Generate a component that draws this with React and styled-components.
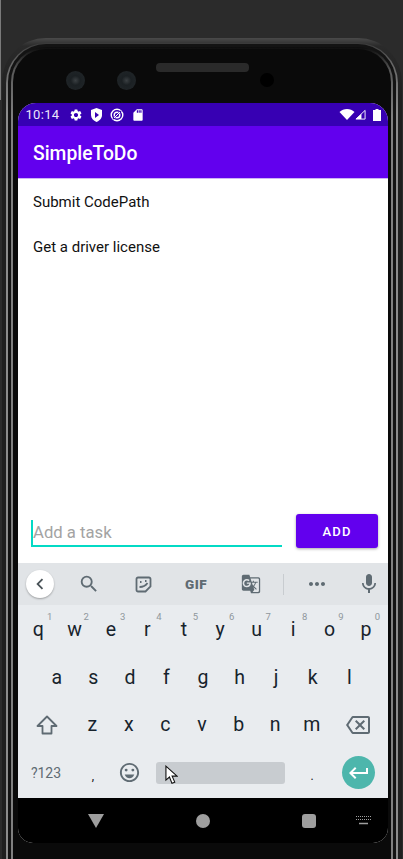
import React from "react";
import styled, { createGlobalStyle } from "styled-components";
import {
  MdSettings, MdSdCard, MdSearch, MdMic, MdChevronLeft, MdMoreHoriz,
  MdKeyboardReturn, MdOutlineBackspace, MdOutlineEmojiEmotions, MdGTranslate,
} from "react-icons/md";

const Global = createGlobalStyle`
  html, body { margin: 0; padding: 0; height: 859px; overflow: hidden; background: #2b2b2b; }
  * { box-sizing: border-box; }
  body { font-family: Roboto, "Liberation Sans", sans-serif; }
`;
const Page = styled.div`
  position: relative; width: 403px; height: 859px; overflow: hidden; padding: 38px 1px 0 2px; background: #2b2b2b;
  &::before { content: ""; position: absolute; left: 0; top: 0; width: 1px; height: 100px; background: #7a7a7a; }
`;
const Shell = styled.div`
  height: 860px; border-radius: 44px 44px 0 0; padding: 5px 4px 0;
  background: linear-gradient(#4a4a4a 0, #2a2a2a 8px, #1f1f1f 60px);
`;
const OuterRim = styled.div`
  height: 100%; border-radius: 40px 40px 0 0; padding: 1px 2px 0;
  background: linear-gradient(#3a3a3a 0, #666 20px, #8c8c8c 70px);
`;
const Gap = styled.div`
  height: 100%; border-radius: 38px 38px 0 0; padding: 3px 3px 0; background: #131313;
`;
const InnerRim = styled.div`
  height: 100%; border-radius: 35px 35px 0 0; padding: 2px 2px 0;
  background: linear-gradient(#0c0c0c 0, #5a5a5a 24px, #808080 70px);
`;
const Bezel = styled.div`
  height: 100%; border-radius: 33px 33px 0 0; background: #0a0a0a; padding: 0 3px 0 5px;
  display: flex; flex-direction: column;
`;
const Notch = styled.div`
  height: 54px; flex: none; display: flex; align-items: flex-start; padding-left: 47.5px;
`;
const Lens = styled.div`
  width: 19px; height: 19px; border-radius: 50%; margin-top: 21.5px; margin-right: ${p => p.$gap}px;
  background: radial-gradient(circle at 50% 50%, #3a3f42 0, #1b2023 35%, #22272a 100%);
`;
const Speaker = styled.div`
  width: 93px; height: 9px; border-radius: 4px; margin-top: 14px; margin-right: 11px; background: #2a2a2a;
`;
const FrontCam = styled.div`
  width: 14px; height: 14px; border-radius: 50%; margin-top: 24px; background: #000;
`;
const Screen = styled.div`
  width: 370px; height: 740px; flex: none; border-radius: 18px 18px 15px 15px; overflow: hidden;
  display: flex; flex-direction: column; background: #fff; position: relative;
`;
const StatusBar = styled.div`
  height: 23px; flex: none; background: #3700b3; color: #fff; display: flex; align-items: center;
  padding: 0 7px 0 7.5px; font-size: 13px;
`;
const Time = styled.span`
  width: 43px; font-weight: 400; letter-spacing: .3px; color: #ece6fb;
`;
const StatusIcons = styled.div`
  display: flex; align-items: center; gap: 7px; flex: 1;
`;
const SysIcons = styled.div`
  display: flex; align-items: center;
`;
const Battery = styled.svg`
  margin-left: 7px; width: 8px; height: 12px;
`;
const AppBar = styled.div`
  height: 53px; flex: none; background: #6200ee; color: #fff; font-size: 19.3px; font-weight: 500;
  display: flex; align-items: center; padding: 2px 15px 0; border-bottom: 1px solid #cdb3f5;
`;
const List = styled.div`
  flex: 1; padding: 0 15px; background: #fff; font-size: 15px; color: #111;
`;
const Task = styled.div`
  height: 45px; display: flex; align-items: center;
`;
const InputRow = styled.div`
  height: 66px; flex: none; display: flex; align-items: flex-start; padding: 17px 10px 0 13px;
  justify-content: space-between; background: #fff;
`;
const Field = styled.div`
  width: 251px; height: 33px; border-bottom: 2px solid #03dac5; display: flex; align-items: center;
  font-size: 16.7px; color: #a3a3a3; position: relative; padding: 5px 0 0 2px;
`;
const Caret = styled.span`
  width: 2px; height: 25px; background: #03dac5; position: absolute; left: 0; top: 6px;
`;
const Add = styled.button`
  width: 82px; height: 34px; border: 0; border-radius: 3px; background: #6200ee; color: #fff;
  font: 500 13px Roboto, sans-serif; letter-spacing: 1.2px; box-shadow: 0 1px 3px rgba(0,0,0,.35);
`;
const Toolbar = styled.div`
  height: 42px; flex: none; background: #e1e4e7; display: flex; align-items: center;
  color: #5f6b73; padding-left: 8px;
`;
const Back = styled.div`
  width: 28px; height: 28px; border-radius: 50%; background: #fff; display: flex; align-items: center; justify-content: center;
  box-shadow: 0 1px 2px rgba(0,0,0,.3); color: #4a5358; font-size: 22px; margin-right: 13px;
`;
const ToolSlot = styled.div`
  width: ${p => p.$w}px; flex: none; display: flex; justify-content: center; align-items: center; font-size: ${p => p.$size || 24}px;
`;
const Gif = styled.span`
  font: 900 13.5px Roboto, sans-serif; letter-spacing: .4px; color: #5f6b73; margin-left: -2px;
`;
const Divider = styled.div`
  width: 1px; height: 21px; background: #c8ccd0;
`;
const Keys = styled.div`
  flex: none; height: 193px; background: #e9ecef; display: flex; flex-direction: column;
`;
const KeyRow = styled.div`
  height: 47.5px; flex: none; display: flex; align-items: center; padding: 0 ${p => p.$r || 0}px 0 ${p => p.$l || 0}px;
  &:first-child { height: 49px; }
`;
const Key = styled.div`
  flex: 1; position: relative; text-align: center; font-size: 19.5px; color: #17232c; line-height: 24px;
  display: flex; justify-content: center; align-items: center;
`;
const FixedKey = styled(Key)`
  flex: none; width: ${p => p.$w}px; padding-right: ${p => p.$pr || 0}px; padding-left: ${p => p.$pl || 0}px;
`;
const Hint = styled.span`
  position: absolute; top: -7px; right: 4px; font-size: 9.5px; line-height: 11px; color: #8f979c;
`;
const SmallKey = styled(FixedKey)`
  font-size: 14px; color: #5f6b73;
`;
const PunctKey = styled(FixedKey)`
  font-size: 12px; color: #111; padding-top: 7px;
`;
const Space = styled.div`
  width: 129px; height: 22px; border-radius: 3px; background: #c8ccd0; flex: none; margin-left: 8px;
`;
const Enter = styled.div`
  width: 33px; height: 33px; border-radius: 50%; background: #4db6ac; color: #fff; font-size: 24px;
  display: flex; align-items: center; justify-content: center;
`;
const NavBar = styled.div`
  height: 45px; flex: none; background: #000; display: flex; align-items: center; padding-left: 70px;
`;
const Tri = styled.div`
  width: 0; height: 0; border-left: 8px solid transparent; border-right: 8px solid transparent; border-top: 14px solid #9e9e9e;
  margin-right: 92px;
`;
const Dot = styled.div`
  width: 14px; height: 14px; border-radius: 50%; background: #9e9e9e; margin-right: 92px;
`;
const Sq = styled.div`
  width: 14px; height: 14px; border-radius: 3px; background: #9e9e9e; margin-right: 40px;
`;
const KbGlyph = styled.svg`
  width: 15px; height: 9px; display: block;
`;
const Cursor = styled.svg`
  position: absolute; left: 147px; top: 662px; width: 13px; height: 20px;
`;

const row1 = [["q",1],["w",2],["e",3],["r",4],["t",5],["y",6],["u",7],["i",8],["o",9],["p",0]];

export default function App() {
  return (
    <Page>
      <Global />
      <Shell><OuterRim><Gap><InnerRim><Bezel>
        <Notch>
          <Lens $gap={32} /><Lens $gap={20.5} /><Speaker /><FrontCam />
        </Notch>
        <Screen>
          <StatusBar>
            <Time>10:14</Time>
            <StatusIcons>
              <MdSettings size={14} />
              <svg width="13" height="14" viewBox="0 0 13 14"><path fill="#fff" d="M6.500 0 12 2v5c0 3.200-2.300 5.800-5.500 7C3.300 12.800 1 10.200 1 7V2z"/><path fill="#3700b3" d="M5 4l4 3-4 3z"/></svg>
              <svg width="14" height="14" viewBox="0 0 14 14" fill="none" stroke="#fff"><circle cx="7" cy="7" r="5.800" strokeWidth="1.400"/><circle cx="7" cy="7" r="2.800" strokeWidth="1.400"/><path d="M3 11 11 3" strokeWidth="1.400" stroke="#3700b3"/><path d="M4 10l6-6" strokeWidth="1"/></svg>
              <MdSdCard size={14} />
            </StatusIcons>
            <SysIcons>
              <svg width="16" height="11" viewBox="0 0 15 11"><path fill="#fff" d="M0 3C4-1 11-1 15 3L7.500 11z"/></svg>
              <svg width="11" height="11" viewBox="0 0 12 11"><path fill="none" stroke="#fff" d="M1 10.500 11 1v9.500z"/><path fill="#fff" d="M1 10.500 7 5v5.500z"/></svg>
              <Battery viewBox="0 0 8 12"><path fill="#fff" d="M2.500 0h3v1H8v11H0V1h2.500z"/></Battery>
            </SysIcons>
          </StatusBar>
          <AppBar>SimpleToDo</AppBar>
          <List>
            <Task>Submit CodePath</Task>
            <Task>Get a driver license</Task>
          </List>
          <InputRow>
            <Field><Caret />Add a task</Field>
            <Add>ADD</Add>
          </InputRow>
          <Toolbar>
            <Back><MdChevronLeft /></Back>
            <ToolSlot $w={44} $size={22}><MdSearch /></ToolSlot>
            <ToolSlot $w={64}>
              <svg width="17" height="17" viewBox="0 0 17 17" fill="none" stroke="#5f6b73" strokeWidth="1.800"><path d="M3 1.500h11a1.500 1.500 0 0 1 1.500 1.500v7.500l-5 5H3A1.500 1.500 0 0 1 1.500 14V3A1.500 1.500 0 0 1 3 1.500z"/><path d="M4.500 11c3 0 6-1 8-4M5 6h1.500M10 5h1.500"/></svg>
            </ToolSlot>
            <ToolSlot $w={44}><Gif>GIF</Gif></ToolSlot>
            <ToolSlot $w={64} $size={20}><MdGTranslate /></ToolSlot>
            <Divider />
            <ToolSlot $w={66}><MdMoreHoriz /></ToolSlot>
            <ToolSlot $w={38}><MdMic /></ToolSlot>
          </Toolbar>
          <Keys>
            <KeyRow $l={2} $r={4}>
              {row1.map(([k, n]) => <Key key={k}>{k}<Hint>{n}</Hint></Key>)}
            </KeyRow>
            <KeyRow $l={20.5} $r={20.5}>
              {"asdfghjkl".split("").map(k => <Key key={k}>{k}</Key>)}
            </KeyRow>
            <KeyRow>
              <FixedKey $w={56} $pl={2}>
                <svg width="22" height="20" viewBox="0 0 22 20" fill="none" stroke="#5f6b73" strokeWidth="1.800"><path d="M11 1.500 20.500 11H15.500v7.500h-9V11H1.500z" strokeLinejoin="round"/></svg>
              </FixedKey>
              {"zxcvbnm".split("").map(k => <Key key={k}>{k}</Key>)}
              <FixedKey $w={58} $pr={2}><MdOutlineBackspace color="#5f6b73" size={24} /></FixedKey>
            </KeyRow>
            <KeyRow>
              <SmallKey $w={56}>?123</SmallKey>
              <PunctKey $w={36} $pl={2}>,</PunctKey>
              <FixedKey $w={38}><MdOutlineEmojiEmotions color="#5f6b73" size={23} /></FixedKey>
              <Space />
              <PunctKey $w={54}>.</PunctKey>
              <FixedKey $w={49} $pr={10}><Enter><MdKeyboardReturn /></Enter></FixedKey>
            </KeyRow>
          </Keys>
          <NavBar>
            <Tri /><Dot /><Sq />
            <KbGlyph viewBox="0 0 15 9" fill="none" stroke="#9e9e9e"><path strokeDasharray="1 1" d="M0 .5h15M0 3.500h15"/><path strokeWidth="1.500" d="M3 7.500h9"/></KbGlyph>
          </NavBar>
          <Cursor viewBox="0 0 14 21"><path fill="#fff" stroke="#111" strokeWidth="1.200" d="M1 1v15l3.800-3.300 2.700 6.800 3-1.300-2.800-6.500H13z"/></Cursor>
        </Screen>
      </Bezel></InnerRim></Gap></OuterRim></Shell>
    </Page>
  );
}
